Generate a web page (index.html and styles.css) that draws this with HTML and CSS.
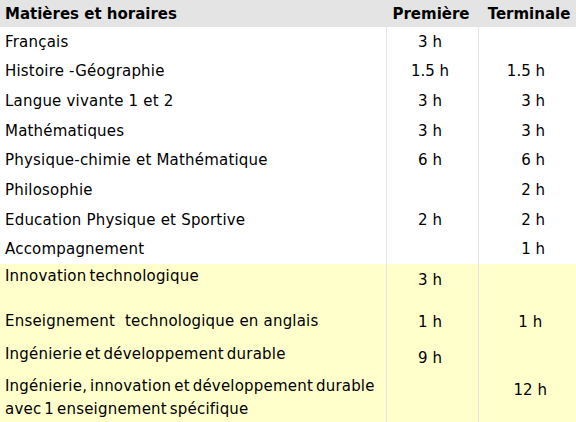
FILE: index.html
```html
<!DOCTYPE html>
<html lang="fr">
<head>
<meta charset="utf-8">
<title>Matières et horaires</title>
<link rel="stylesheet" href="styles.css">
</head>
<body>
<table class="grid">
  <colgroup>
    <col class="c-label">
    <col class="c-first">
    <col class="c-term">
  </colgroup>
  <thead>
    <tr class="head">
      <th class="label">Matières et horaires</th>
      <th class="first">Première</th>
      <th class="term">Terminale</th>
    </tr>
  </thead>
  <tbody class="common">
    <tr><td class="label">Français</td><td class="first">3 h</td><td class="term"></td></tr>
    <tr><td class="label">Histoire -Géographie</td><td class="first">1.5 h</td><td class="term">1.5 h</td></tr>
    <tr><td class="label">Langue vivante 1 et 2</td><td class="first">3 h</td><td class="term">3 h</td></tr>
    <tr><td class="label">Mathématiques</td><td class="first">3 h</td><td class="term">3 h</td></tr>
    <tr><td class="label">Physique-chimie et Mathématique</td><td class="first">6 h</td><td class="term">6 h</td></tr>
    <tr><td class="label">Philosophie</td><td class="first"></td><td class="term">2 h</td></tr>
    <tr><td class="label">Education Physique et Sportive</td><td class="first">2 h</td><td class="term">2 h</td></tr>
    <tr><td class="label">Accompagnement</td><td class="first"></td><td class="term">1 h</td></tr>
  </tbody>
  <tbody class="spec">
    <tr class="r9"><td class="label tight">Innovation technologique</td><td class="first">3 h</td><td class="term"></td></tr>
    <tr class="r10"><td class="label">Enseignement&nbsp; technologique en anglais</td><td class="first">1 h</td><td class="term">1 h</td></tr>
    <tr class="r11"><td class="label tight">Ingénierie et développement durable</td><td class="first">9 h</td><td class="term"></td></tr>
    <tr class="r12"><td class="label tight">Ingénierie, innovation et développement durable<br>avec 1 enseignement spécifique</td><td class="first"></td><td class="term">12 h</td></tr>
  </tbody>
</table>
</body>
</html>
```
FILE: styles.css
```css
html, body {
  margin: 0;
  padding: 0;
  background: #ffffff;
}
body {
  width: 576px;
  height: 422px;
  overflow: hidden;
  font-family: "Comic Sans MS", "DejaVu Sans", sans-serif;
  font-size: 15px;
  color: #000000;
}
.grid {
  width: 576px;
  border-collapse: collapse;
  table-layout: fixed;
}
.c-label { width: 386px; }
.c-first { width: 92px; }
.c-term { width: 98px; }

.grid th, .grid td {
  padding: 0;
  white-space: nowrap;
}
.head {
  background: #e4e4e4;
  height: 27px;
}
.head th {
  font-weight: bold;
  vertical-align: middle;
}
.head .label { text-align: left; padding-left: 5px; }
.head .first { text-align: center; padding-right: 2px; }
.head .term { text-align: center; padding-left: 4px; }

.grid td.first, .grid td.term {
  border-left: 1px solid #e6e6dc;
}
.grid td.label { padding-left: 5px; text-align: left; letter-spacing: 0.2px; }
.grid td.label.tight { word-spacing: -2px; }
.grid td.first { text-align: center; padding-right: 4px; }

.common tr { height: 29.625px; }
.common td { vertical-align: middle; }
.common td.term { text-align: right; padding-right: 31px; }

.spec { background: #ffffcc; }
.spec td { vertical-align: top; line-height: 20px; }
.spec td.term { text-align: center; padding-left: 6px; }

.r9 { height: 34px; }
.r9 td.label { padding-top: 2px; }
.r9 td.first, .r9 td.term { padding-top: 6px; }

.r10 { height: 42px; }
.r10 td.label { padding-top: 13px; }
.r10 td.first, .r10 td.term { padding-top: 14px; }

.r11 { height: 30px; }
.r11 td.label { padding-top: 4px; }
.r11 td.first, .r11 td.term { padding-top: 8px; }

.r12 { height: 52px; }
.r12 td.label { padding-top: 5px; line-height: 23px; }
.r12 td.first, .r12 td.term { padding-top: 10px; }
```
